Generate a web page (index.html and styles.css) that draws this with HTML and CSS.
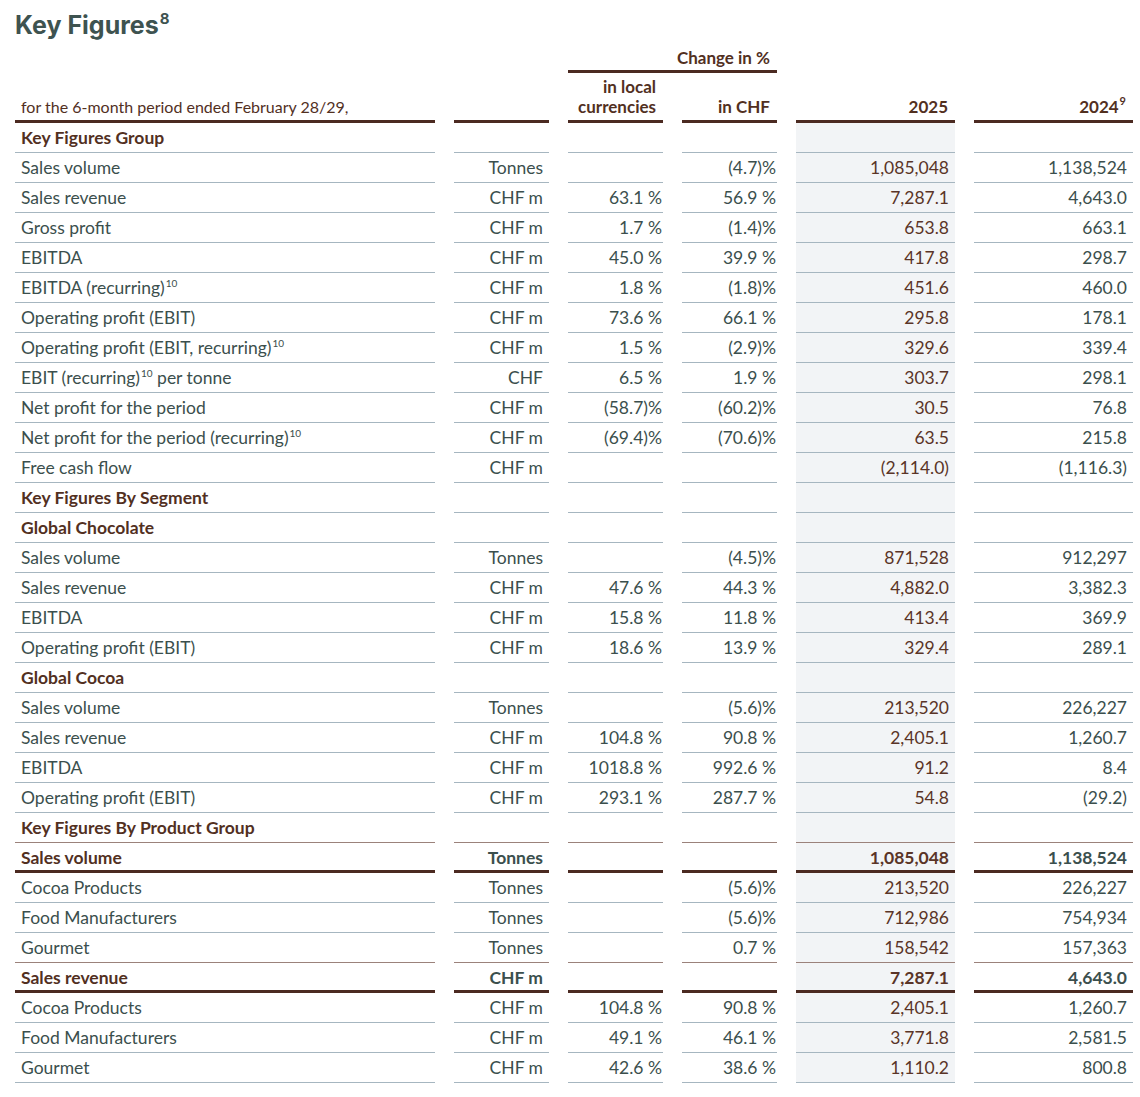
FILE: index.html
```html
<!DOCTYPE html>
<html lang="en">
<head>
<meta charset="utf-8">
<title>Key Figures</title>
<link rel="stylesheet" href="styles.css">
</head>
<body>
<div class="page">
  <h1 class="title">Key Figures<sup class="title-fn">8</sup></h1>
  <table class="kf">
    <colgroup>
      <col class="c-label"><col class="c-unit"><col class="c-pct"><col class="c-pct"><col class="c-year"><col class="c-year">
    </colgroup>
    <thead>
      <tr class="h-top">
        <th></th><th></th>
        <th colspan="2" class="h-change">Change in %</th>
        <th></th><th></th>
      </tr>
      <tr class="h-main">
        <th class="h-period">for the 6-month period ended February 28/29,</th>
        <th></th>
        <th class="num">in local<br>currencies</th>
        <th class="num">in CHF</th>
        <th class="num">2025</th>
        <th class="num">2024<sup class="fn">9</sup></th>
      </tr>
    </thead>
    <tbody>
      <tr class="sec"><td>Key Figures Group</td><td></td><td></td><td></td><td></td><td></td></tr>
      <tr><td>Sales volume</td><td>Tonnes</td><td></td><td>(4.7)%</td><td>1,085,048</td><td>1,138,524</td></tr>
      <tr><td>Sales revenue</td><td>CHF m</td><td>63.1 %</td><td>56.9 %</td><td>7,287.1</td><td>4,643.0</td></tr>
      <tr><td>Gross profit</td><td>CHF m</td><td>1.7 %</td><td>(1.4)%</td><td>653.8</td><td>663.1</td></tr>
      <tr><td>EBITDA</td><td>CHF m</td><td>45.0 %</td><td>39.9 %</td><td>417.8</td><td>298.7</td></tr>
      <tr><td>EBITDA (recurring)<sup class="fn">10</sup></td><td>CHF m</td><td>1.8 %</td><td>(1.8)%</td><td>451.6</td><td>460.0</td></tr>
      <tr><td>Operating profit (EBIT)</td><td>CHF m</td><td>73.6 %</td><td>66.1 %</td><td>295.8</td><td>178.1</td></tr>
      <tr><td>Operating profit (EBIT, recurring)<sup class="fn">10</sup></td><td>CHF m</td><td>1.5 %</td><td>(2.9)%</td><td>329.6</td><td>339.4</td></tr>
      <tr><td>EBIT (recurring)<sup class="fn">10</sup> per tonne</td><td>CHF</td><td>6.5 %</td><td>1.9 %</td><td>303.7</td><td>298.1</td></tr>
      <tr><td>Net profit for the period</td><td>CHF m</td><td>(58.7)%</td><td>(60.2)%</td><td>30.5</td><td>76.8</td></tr>
      <tr><td>Net profit for the period (recurring)<sup class="fn">10</sup></td><td>CHF m</td><td>(69.4)%</td><td>(70.6)%</td><td>63.5</td><td>215.8</td></tr>
      <tr><td>Free cash flow</td><td>CHF m</td><td></td><td></td><td>(2,114.0)</td><td>(1,116.3)</td></tr>
      <tr class="sec"><td>Key Figures By Segment</td><td></td><td></td><td></td><td></td><td></td></tr>
      <tr class="sec"><td>Global Chocolate</td><td></td><td></td><td></td><td></td><td></td></tr>
      <tr><td>Sales volume</td><td>Tonnes</td><td></td><td>(4.5)%</td><td>871,528</td><td>912,297</td></tr>
      <tr><td>Sales revenue</td><td>CHF m</td><td>47.6 %</td><td>44.3 %</td><td>4,882.0</td><td>3,382.3</td></tr>
      <tr><td>EBITDA</td><td>CHF m</td><td>15.8 %</td><td>11.8 %</td><td>413.4</td><td>369.9</td></tr>
      <tr><td>Operating profit (EBIT)</td><td>CHF m</td><td>18.6 %</td><td>13.9 %</td><td>329.4</td><td>289.1</td></tr>
      <tr class="sec"><td>Global Cocoa</td><td></td><td></td><td></td><td></td><td></td></tr>
      <tr><td>Sales volume</td><td>Tonnes</td><td></td><td>(5.6)%</td><td>213,520</td><td>226,227</td></tr>
      <tr><td>Sales revenue</td><td>CHF m</td><td>104.8 %</td><td>90.8 %</td><td>2,405.1</td><td>1,260.7</td></tr>
      <tr><td>EBITDA</td><td>CHF m</td><td>1018.8 %</td><td>992.6 %</td><td>91.2</td><td>8.4</td></tr>
      <tr><td>Operating profit (EBIT)</td><td>CHF m</td><td>293.1 %</td><td>287.7 %</td><td>54.8</td><td>(29.2)</td></tr>
      <tr class="sec pre"><td>Key Figures By Product Group</td><td></td><td></td><td></td><td></td><td></td></tr>
      <tr class="tot"><td>Sales volume</td><td>Tonnes</td><td></td><td></td><td>1,085,048</td><td>1,138,524</td></tr>
      <tr><td>Cocoa Products</td><td>Tonnes</td><td></td><td>(5.6)%</td><td>213,520</td><td>226,227</td></tr>
      <tr><td>Food Manufacturers</td><td>Tonnes</td><td></td><td>(5.6)%</td><td>712,986</td><td>754,934</td></tr>
      <tr class="pre"><td>Gourmet</td><td>Tonnes</td><td></td><td>0.7 %</td><td>158,542</td><td>157,363</td></tr>
      <tr class="tot"><td>Sales revenue</td><td>CHF m</td><td></td><td></td><td>7,287.1</td><td>4,643.0</td></tr>
      <tr><td>Cocoa Products</td><td>CHF m</td><td>104.8 %</td><td>90.8 %</td><td>2,405.1</td><td>1,260.7</td></tr>
      <tr><td>Food Manufacturers</td><td>CHF m</td><td>49.1 %</td><td>46.1 %</td><td>3,771.8</td><td>2,581.5</td></tr>
      <tr><td>Gourmet</td><td>CHF m</td><td>42.6 %</td><td>38.6 %</td><td>1,110.2</td><td>800.8</td></tr>
    </tbody>
  </table>
</div>
</body>
</html>
```

FILE: styles.css
```css
html, body {
  margin: 0;
  padding: 0;
  background: #ffffff;
}

.page {
  padding: 0 0 0 15px;
  overflow: hidden;
  font-family: Lato, "Open Sans", sans-serif;
  font-size: 17.5px;
  color: #3b4f4d;
}

.title {
  margin: 0;
  padding-top: 10px;
  height: 36px;
  font-family: Inter, "Open Sans", sans-serif;
  font-weight: 700;
  font-size: 25px;
  line-height: 30px;
  letter-spacing: 0;
  color: #3e5350;
}

.title-fn {
  font-size: 15px;
  line-height: 0;
  vertical-align: 10px;
  margin-left: 1px;
}

.kf {
  width: 1156px;
  margin-left: -19px;
  border-collapse: separate;
  border-spacing: 19px 0;
  table-layout: fixed;
}

.c-label { width: 420px; }
.c-unit { width: 95px; }
.c-pct { width: 95px; }
.c-year { width: 159px; }

.kf th,
.kf td {
  padding: 0;
  box-sizing: border-box;
  white-space: nowrap;
}

/* Header */
.kf thead th {
  font-weight: 700;
  font-size: 17px;
  color: #52301f;
  vertical-align: bottom;
  line-height: 20px;
}

.h-top th {
  height: 27px;
}

.h-change {
  text-align: right;
  padding: 0 7px 5px 0 !important;
  box-shadow: inset 0 -3px 0 #4b2a21;
}

.h-main th {
  height: 50px;
  padding-bottom: 6px !important;
  box-shadow: inset 0 -3px 0 #4b2a21;
}

.h-main th.num {
  text-align: right;
  padding-right: 7px !important;
}

.h-main .h-period {
  text-align: left;
  font-weight: 400 !important;
  font-size: 16px !important;
  padding-left: 6px !important;
}

/* Body */
.kf tbody td {
  height: 30px;
  line-height: 30px;
  vertical-align: top;
  text-align: right;
  padding-right: 6px;
  box-shadow: inset 0 -1px 0 #a6b6c0;
}

.kf tbody td:first-child {
  text-align: left;
  padding-left: 6px;
  padding-right: 0;
}

.kf tbody td:nth-child(3),
.kf tbody td:nth-child(4) {
  padding-right: 1px;
}

.kf tbody td:nth-child(5) {
  background: #f2f4f6;
  color: #5a3427;
}

.sec td:first-child {
  font-weight: 700;
  color: #52301f;
}

.kf tbody tr.pre td {
  box-shadow: inset 0 -1px 0 #9b827b;
}

.kf tbody tr.tot td {
  font-weight: 700;
  box-shadow: inset 0 -3px 0 #4b2a21;
}

.tot td:first-child {
  color: #52301f;
}

.fn {
  font-size: 10px;
  line-height: 0;
  vertical-align: 7px;
  margin-left: 1px;
}

.h-main .fn {
  font-size: 11px;
  vertical-align: 8px;
}
```
